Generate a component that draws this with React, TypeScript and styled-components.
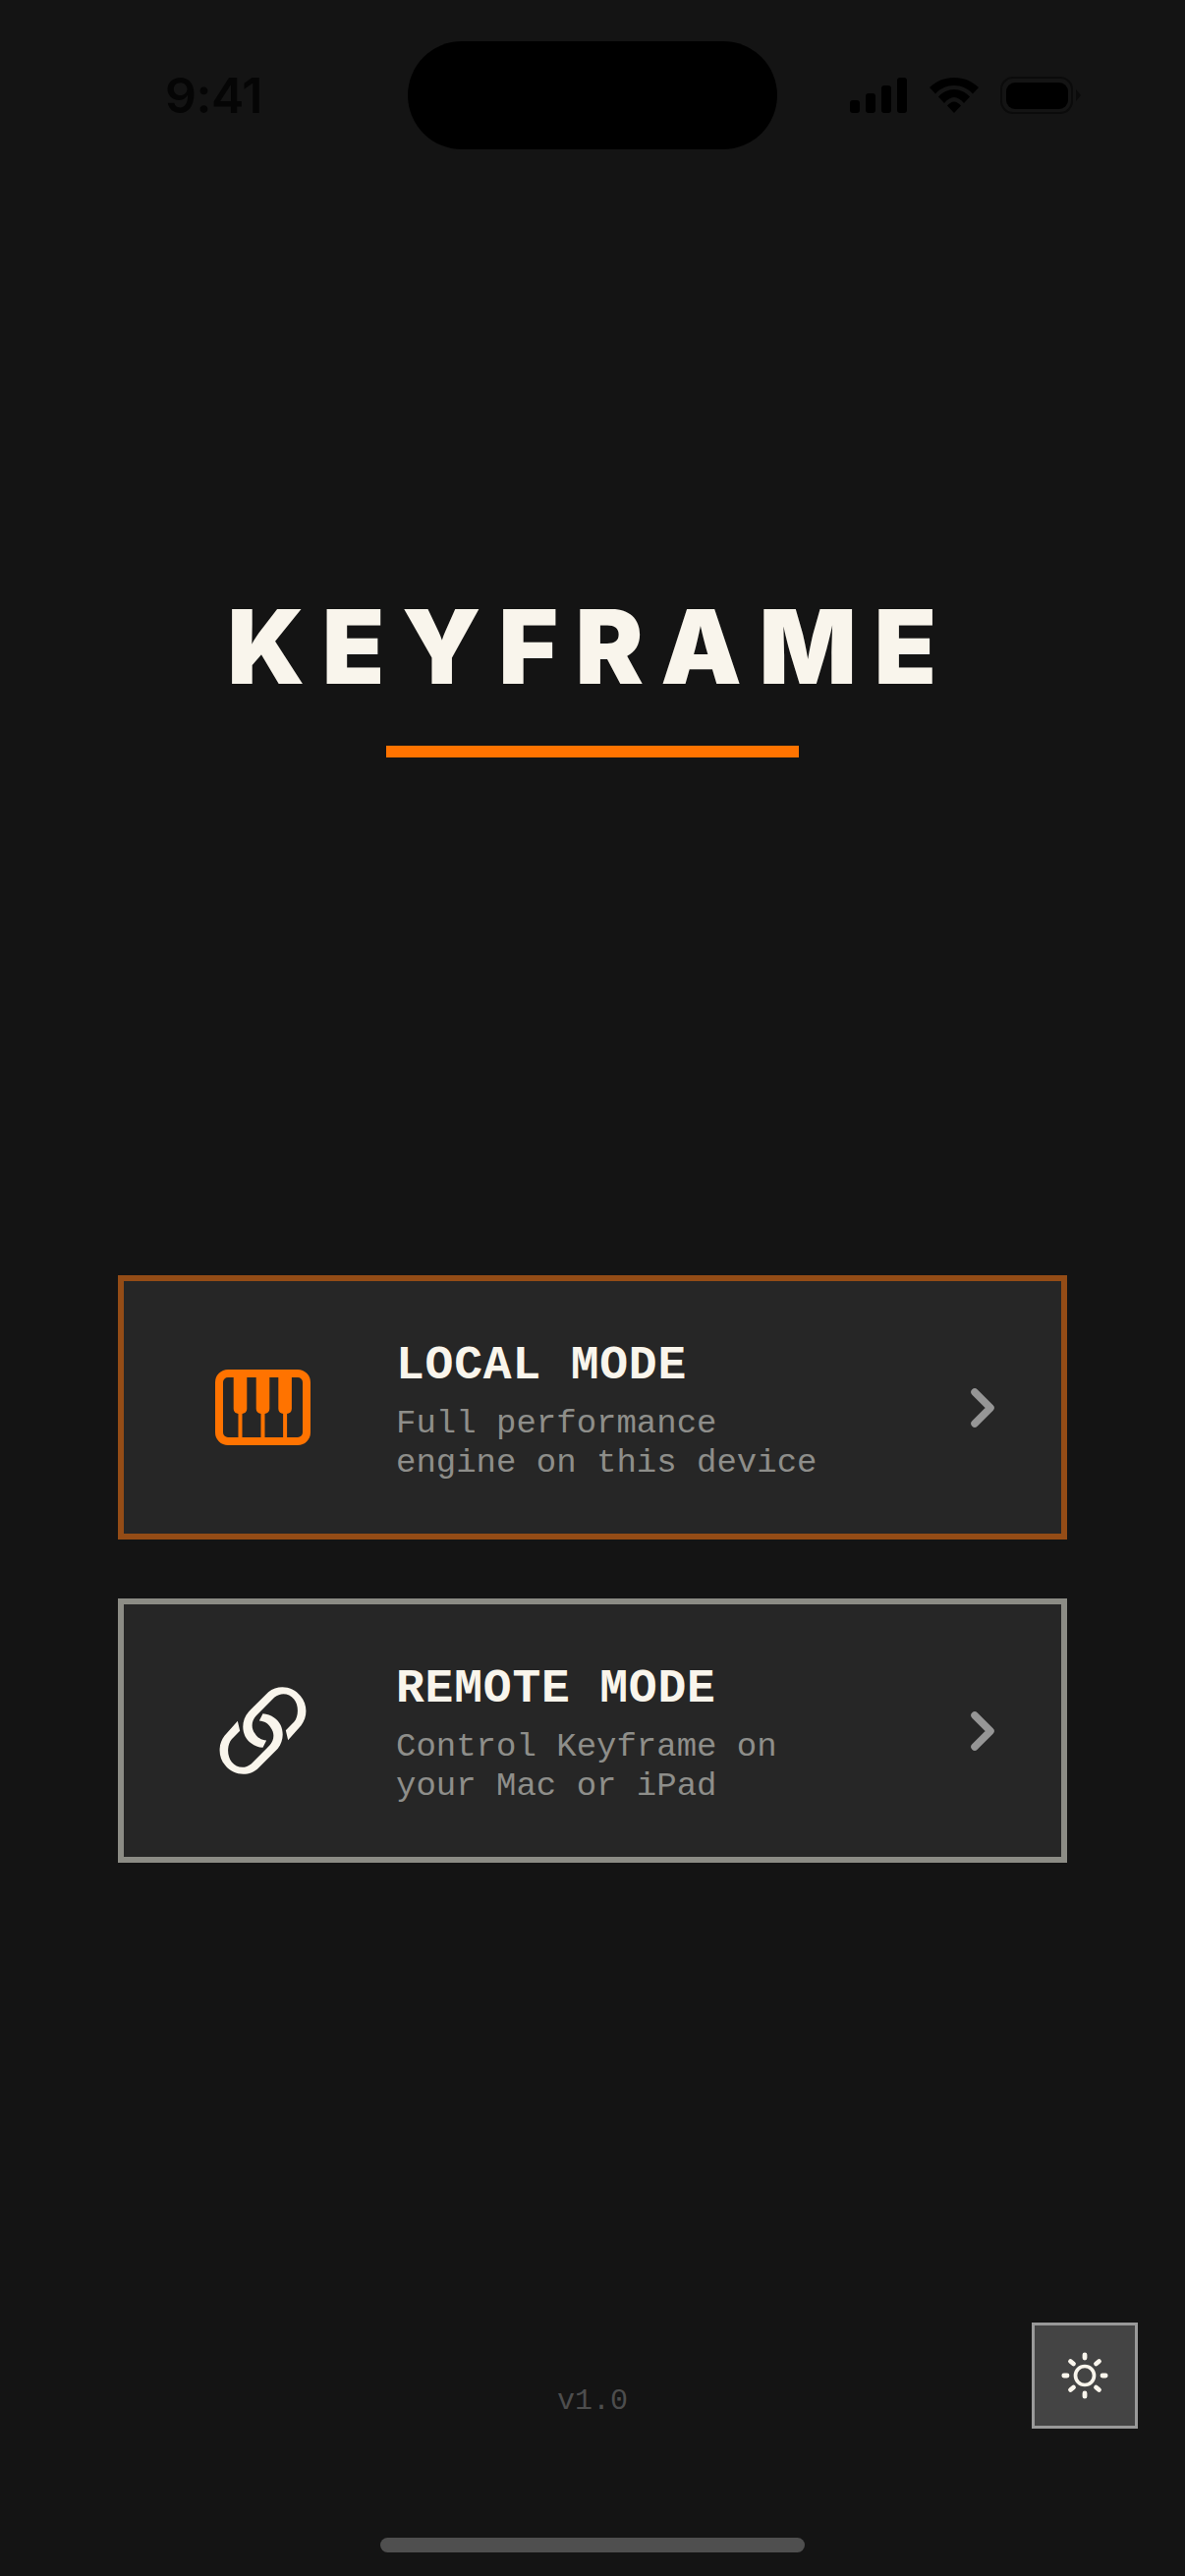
import React from "react";
import styled, { createGlobalStyle } from "styled-components";

const Global = createGlobalStyle`
  html, body { margin: 0; padding: 0; background: #141414; }
`;

const Screen = styled.div`
  position: relative;
  width: 1206px;
  height: 2622px;
  background: #141414;
  overflow: hidden;
  display: flex;
  flex-direction: column;
  align-items: center;
`;

const StatusBar = styled.div`
  width: 100%;
  margin-top: 42px;
  height: 110px;
  display: grid;
  grid-template-columns: 415px 376px 1fr;
  color: #050505;
`;

const Time = styled.div`
  font-family: "Inter", sans-serif;
  font-weight: 600;
  font-size: 50px;
  line-height: 110px;
  padding-left: 168px;
  letter-spacing: -0.5px;
`;

const Island = styled.div`
  background: #000;
  border-radius: 55px;
`;

const StatusIcons = styled.div`
  display: flex;
  align-items: center;
  gap: 22.5px;
  padding-left: 74px;
`;

const Title = styled.h1`
  margin: 443px 0 0;
  padding-right: 4px;
  font-family: "Inter", sans-serif;
  font-weight: 900;
  font-size: 104px;
  line-height: 126px;
  letter-spacing: 17.5px;
  color: #f9f5ec;
`;

const Rule = styled.div`
  width: 420px;
  height: 12px;
  margin-top: 38px;
  background: #ff7300;
`;

const Cards = styled.div`
  margin-top: 527px;
  width: 966px;
  display: flex;
  flex-direction: column;
  gap: 60px;
`;

const Card = styled.button<{ $border: string }>`
  box-sizing: border-box;
  width: 966px;
  height: 269px;
  padding: 0;
  border: 6px solid ${(p) => p.$border};
  background: #262626;
  display: flex;
  align-items: center;
  text-align: left;
`;

const IconSlot = styled.div`
  box-sizing: border-box;
  width: 277px;
  padding-left: 5px;
  flex: none;
  display: flex;
  justify-content: center;
`;

const CardText = styled.div`
  flex: 1;
  padding-top: 5px;
  font-family: "Liberation Mono", monospace;
`;

const CardTitle = styled.div`
  font-weight: 700;
  font-size: 48px;
  line-height: 56px;
  letter-spacing: 0.8px;
  color: #f9f5ec;
  margin-bottom: 11px;
`;

const CardSub = styled.div`
  font-size: 34px;
  line-height: 40px;
  color: #8e8e8a;
`;

const Chevron = styled.svg`
  flex: none;
  margin-right: 68px;
`;

const Version = styled.div`
  position: absolute;
  left: 0;
  right: 0;
  top: 2426px;
  text-align: center;
  font-family: "Liberation Mono", monospace;
  font-size: 30px;
  line-height: 36px;
  color: #4d4d4d;
`;

const HomeBar = styled.div`
  position: absolute;
  left: 387px;
  top: 2583px;
  width: 432px;
  height: 15px;
  border-radius: 8px;
  background: #4f4f4f;
`;

const ThemeButton = styled.button`
  position: absolute;
  left: 1050px;
  top: 2364px;
  box-sizing: border-box;
  width: 108px;
  height: 108px;
  padding: 0;
  border: 3px solid #999;
  background: #444;
  display: flex;
  align-items: center;
  justify-content: center;
`;

const ChevronIcon = () => (
  <Chevron width="24" height="40" viewBox="0 0 24 40" fill="none">
    <path d="M4 4 L20 20 L4 36" stroke="#969696" strokeWidth="7.5" strokeLinecap="round" strokeLinejoin="round" />
  </Chevron>
);

const PianoIcon = () => (
  <svg width="97" height="77" viewBox="0 0 97 77" fill="#ff7300">
    <path fillRule="evenodd" d="M13 0H84A13 13 0 0 1 97 13V64A13 13 0 0 1 84 77H13A13 13 0 0 1 0 64V13A13 13 0 0 1 13 0ZM13 8A5 5 0 0 0 8 13V64A5 5 0 0 0 13 69H84A5 5 0 0 0 89 64V13A5 5 0 0 0 84 8Z" />
    <path d="M18.700 6H32.300V40A5 5 0 0 1 27.300 45H23.700A5 5 0 0 1 18.700 40Z" />
    <path d="M41.700 6H55.300V40A5 5 0 0 1 50.300 45H46.700A5 5 0 0 1 41.700 40Z" />
    <path d="M64.300 6H77.900V40A5 5 0 0 1 72.900 45H69.300A5 5 0 0 1 64.300 40Z" />
    <rect x="23.500" y="44" width="4" height="27" />
    <rect x="46.500" y="44" width="4" height="27" />
    <rect x="69.100" y="44" width="4" height="27" />
  </svg>
);

const linkHalf =
  "M232 185 L272 140 C292 115 292 75 270 50 C245 18 200 15 172 38 L112 98 C85 128 90 175 120 195 C130 203 142 207 155 208 L166 186 C150 184 138 178 131 165 C118 148 120 125 135 110 L190 55 C210 38 235 42 250 60 C265 78 265 112 250 130 L225 155 Z";

const LinkIcon = () => (
  <svg width="105" height="105" viewBox="-2.500 -1.500 315 315" fill="#f9f5ec">
    <path d={linkHalf} />
    <path d={linkHalf} transform="rotate(180 155 156)" />
  </svg>
);

const SunIcon = () => (
  <svg width="50" height="50" viewBox="0 0 50 50" fill="none" stroke="#f9f5ec" strokeLinecap="round">
    <circle cx="25" cy="25" r="9.500" strokeWidth="3.700" />
    <g strokeWidth="4.800">
      <path d="M25 3.800V7M25 43V46.200M3.800 25H7M43 25H46.200" />
      <path d="M10.500 10.500L13.500 13M39.500 10.500L36.500 13M10.500 39.500L13.500 37M39.500 39.500L36.500 37" />
    </g>
  </svg>
);

const SignalIcon = () => (
  <svg width="58" height="36" viewBox="0 0 58 36" fill="#000">
    <rect x="0" y="23" width="10" height="13" rx="3" />
    <rect x="16" y="16" width="10" height="20" rx="3" />
    <rect x="32" y="8" width="10" height="28" rx="3" />
    <rect x="48" y="0" width="10" height="36" rx="3" />
  </svg>
);

const WifiIcon = () => (
  <svg width="50" height="36" viewBox="0 0 50 36" fill="#000">
    <path d="M25 0C35 0 43 3.500 50 10L44 16.500C39 11 32.500 8 25 8C17.500 8 11 11 6 16.500L0 10C7 3.500 15 0 25 0Z" />
    <path d="M25 12C31 12 36.500 14.800 41 19.500L35 26C32 22.500 28.500 20 25 20C21.500 20 18 22.500 15 26L9 19.500C13.500 14.800 19 12 25 12Z" />
    <path d="M25 24.500C27.500 24.500 30 26.200 32 28.500L25 36L18 28.500C20 26.200 22.500 24.500 25 24.500Z" />
  </svg>
);

const BatteryIcon = () => (
  <svg width="82" height="38" viewBox="0 0 82 38">
    <rect x="1" y="1" width="72" height="36" rx="12" fill="none" stroke="#0b0b0b" strokeWidth="2" />
    <rect x="6" y="6" width="63" height="27" rx="9" fill="#000" />
    <path d="M77 13L82 19L77 25Z" fill="#0b0b0b" />
  </svg>
);

export default function App() {
  return (
    <Screen>
      <Global />
      <StatusBar>
        <Time>9:41</Time>
        <Island />
        <StatusIcons>
          <SignalIcon />
          <WifiIcon />
          <BatteryIcon />
        </StatusIcons>
      </StatusBar>
      <Title>KEYFRAME</Title>
      <Rule />
      <Cards>
        <Card $border="#944c16">
          <IconSlot><PianoIcon /></IconSlot>
          <CardText>
            <CardTitle>LOCAL MODE</CardTitle>
            <CardSub>Full performance<br />engine on this device</CardSub>
          </CardText>
          <ChevronIcon />
        </Card>
        <Card $border="#8c8c85">
          <IconSlot><LinkIcon /></IconSlot>
          <CardText>
            <CardTitle>REMOTE MODE</CardTitle>
            <CardSub>Control Keyframe on<br />your Mac or iPad</CardSub>
          </CardText>
          <ChevronIcon />
        </Card>
      </Cards>
      <Version>v1.0</Version>
      <ThemeButton><SunIcon /></ThemeButton>
      <HomeBar />
    </Screen>
  );
}
